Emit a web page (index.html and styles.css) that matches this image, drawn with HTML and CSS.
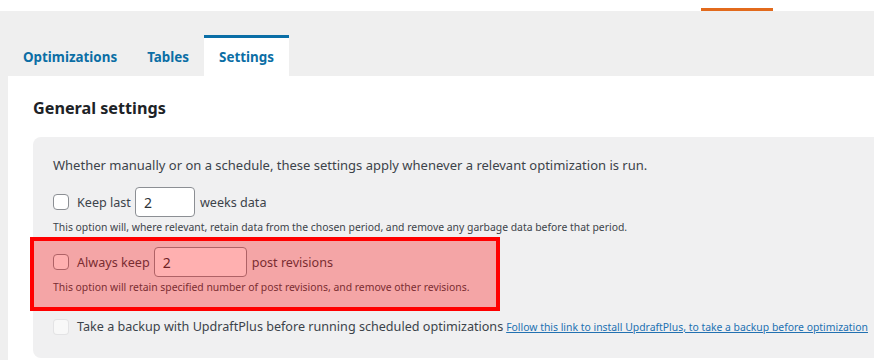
FILE: index.html
```html
<!DOCTYPE html>
<html lang="en">
<head>
<meta charset="utf-8">
<title>Settings</title>
<link rel="stylesheet" href="styles.css">
</head>
<body>
<div class="topbar"><span class="topbar-accent"></span></div>
<nav class="tabs">
  <a class="tab" href="#">Optimizations</a>
  <a class="tab" href="#">Tables</a>
  <a class="tab tab-active" href="#">Settings</a>
</nav>
<main class="panel">
  <h2 class="panel-title">General settings</h2>
  <section class="settings-box">
    <p class="intro">Whether manually or on a schedule, these settings apply whenever a relevant optimization is run.</p>
    <div class="setting">
      <label class="setting-line">
        <input type="checkbox" class="check">
        <span>Keep last</span>
        <input type="text" class="num num-short" value="2">
        <span>weeks data</span>
      </label>
      <small class="desc">This option will, where relevant, retain data from the chosen period, and remove any garbage data before that period.</small>
    </div>
    <div class="setting setting-highlight">
      <label class="setting-line">
        <input type="checkbox" class="check">
        <span>Always keep</span>
        <input type="text" class="num num-wide" value="2">
        <span>post revisions</span>
      </label>
      <small class="desc">This option will retain specified number of post revisions, and remove other revisions.</small>
    </div>
    <div class="setting setting-last">
      <label class="setting-line">
        <input type="checkbox" class="check" disabled>
        <span>Take a backup with UpdraftPlus before running scheduled optimizations</span>
        <a class="install-link" href="#">Follow this link to install UpdraftPlus, to take a backup before optimization</a>
      </label>
    </div>
  </section>
</main>
</body>
</html>
```
FILE: styles.css
```css
* { box-sizing: border-box; }
html, body { margin: 0; padding: 0; }
body {
  background: #efefef;
  font-family: "Noto Sans", "Open Sans", sans-serif;
  color: #3c434a;
  overflow: hidden;
  height: 360px;
}
.topbar {
  height: 11px;
  background: #ffffff;
  display: flex;
  align-items: flex-end;
  padding-left: 701px;
}
.topbar-accent {
  display: block;
  width: 72px;
  height: 3px;
  background: #e26a1c;
}
.tabs {
  display: flex;
  padding: 24px 0 0 8px;
}
.tab {
  display: block;
  height: 41px;
  line-height: 38px;
  padding: 0 15px;
  border-top: 3px solid transparent;
  font-size: 13.4px;
  font-weight: 700;
  color: #0b6ea5;
  text-decoration: none;
}
.tab-active {
  background: #ffffff;
  border-top-color: #0a6ea6;
}
.panel {
  background: #ffffff;
  margin-left: 8px;
  padding: 20px 0 0 25px;
  height: 290px;
}
.panel-title {
  margin: 0 0 17px;
  font-size: 16.2px;
  line-height: 24px;
  font-weight: 700;
  color: #1d2327;
}
.settings-box {
  background: #f0f0f1;
  border-radius: 8px 0 0 8px;
  padding: 19px 0 0 20px;
  height: 221px;
}
.intro {
  margin: 0 0 13px;
  font-size: 13px;
  line-height: 18px;
}
.setting {
  margin-bottom: 13px;
}
.setting-line {
  display: flex;
  align-items: center;
  font-size: 12.6px;
  white-space: nowrap;
}
.check {
  appearance: none;
  -webkit-appearance: none;
  width: 16px;
  height: 16px;
  margin: 0 8px 0 0;
  border: 1px solid #8c8f94;
  border-radius: 4px;
  background: #ffffff;
  flex: none;
}
.check:disabled {
  border-color: rgba(220, 220, 222, 0.75);
  background: rgba(255, 255, 255, 0.5);
}
.num {
  height: 30px;
  margin: 0 5px 0 4px;
  padding: 0 8px;
  border: 1px solid #8c8f94;
  border-radius: 4px;
  background: #ffffff;
  font-family: inherit;
  font-size: 14px;
  color: #2c3338;
}
.num-short { width: 60px; }
.num-wide { width: 93px; }
.desc {
  display: block;
  margin-top: 3px;
  font-size: 10.4px;
  line-height: 14px;
  color: #3c434a;
}
.setting-highlight {
  position: relative;
}
.setting-highlight::after {
  content: "";
  position: absolute;
  top: -10px;
  left: -23px;
  width: 462px;
  height: 66px;
  border: 4px solid #ff0000;
  background: rgba(255, 0, 0, 0.31);
  pointer-events: none;
}
.setting-last { margin-top: 24px; }
.install-link {
  margin-left: 3px;
  font-size: 10.4px;
  color: #2271b1;
}
```
